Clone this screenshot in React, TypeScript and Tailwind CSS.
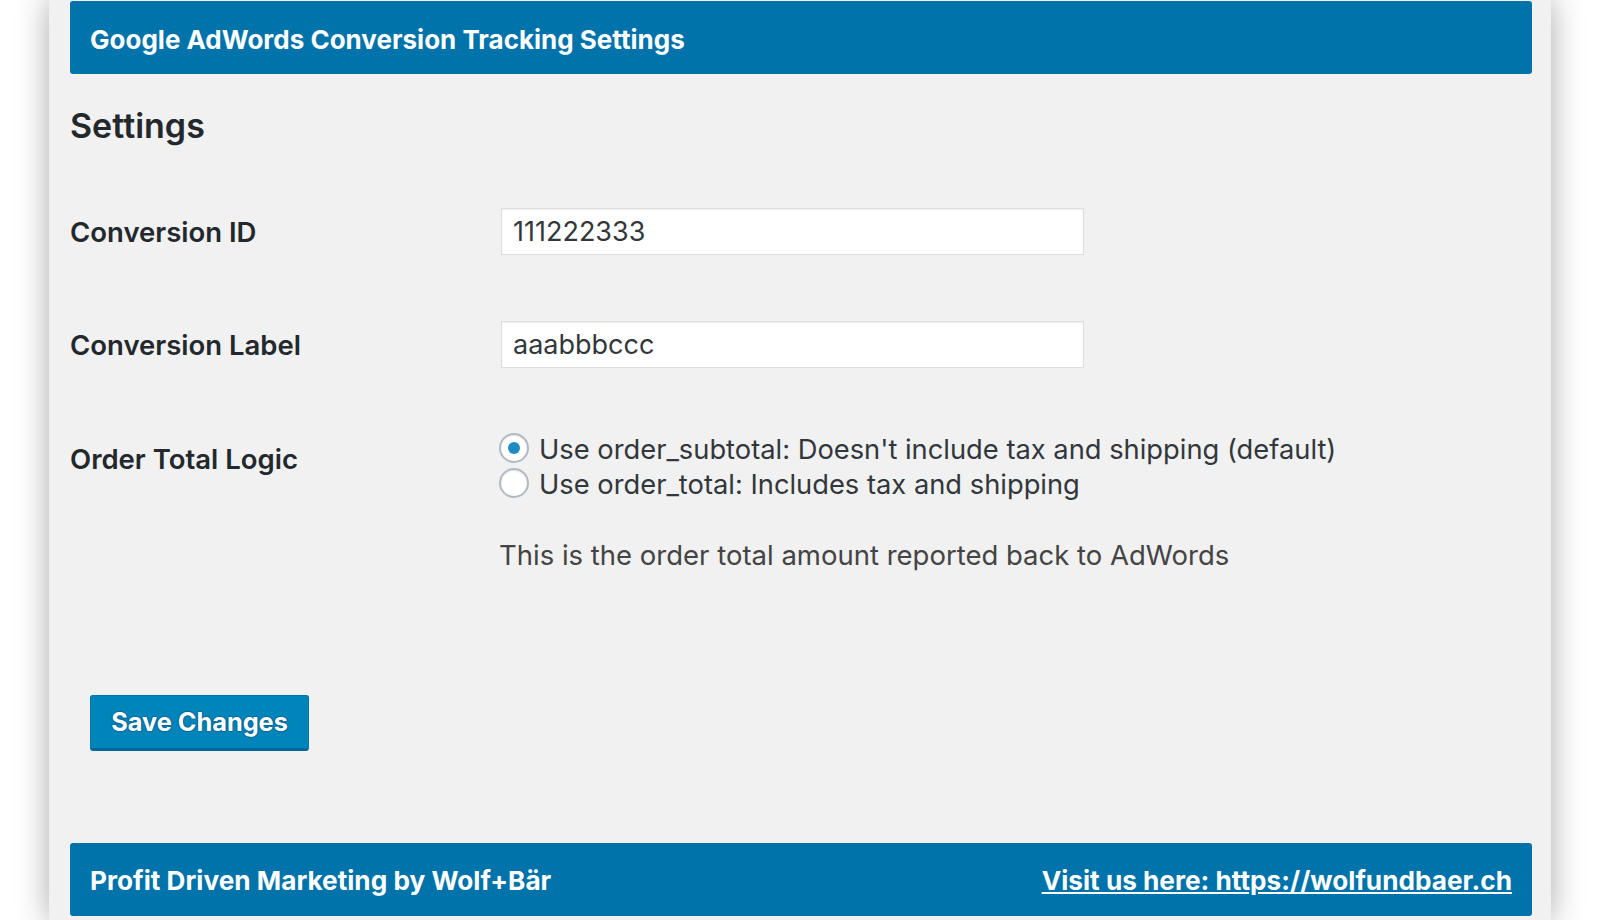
import { useState } from 'react';

const font = { fontFamily: 'Inter, "Liberation Sans", sans-serif' };

function Radio({ checked, onClick, label }: { checked: boolean; onClick: () => void; label: string }) {
  return (
    <div className="flex items-center h-[35px] cursor-pointer" onClick={onClick}>
      <span className="w-[30px] h-[30px] rounded-full border-2 border-[#b4b9be] bg-white shadow-[inset_0_1px_2px_rgba(0,0,0,0.1)] flex items-center justify-center shrink-0">
        {checked && <span className="w-[12px] h-[12px] rounded-full bg-[#1e8cbe]" />}
      </span>
      <span className="ml-[10px] pt-[3px] text-[27.3px] text-[#32373c] leading-[35px]">{label}</span>
    </div>
  );
}

export default function App() {
  const [logic, setLogic] = useState('subtotal');

  return (
    <div className="min-h-screen bg-white overflow-hidden" style={font}>
      <div className="ml-[49px] w-[1502px] h-[920px] bg-[#f1f1f1] shadow-[0_0_30px_rgba(0,0,0,0.35)] pl-[21px] pr-[19px] pt-px">
        <div className="h-[73px] rounded-[3px] bg-[#0073aa] flex items-center pl-[20px] pt-[3px]">
          <h1 className="text-white font-bold text-[26px]">Google AdWords Conversion Tracking Settings</h1>
        </div>

        <h2 className="mt-[32px] h-[40px] leading-[40px] text-[34px] font-semibold text-[#23282d]">Settings</h2>

        <div className="mt-[62px] flex items-center">
          <div className="w-[431px] text-[27.5px] font-semibold text-[#23282d] pt-[2px]">Conversion ID</div>
          <input
            defaultValue="111222333"
            className="w-[583px] h-[47px] bg-white border border-[#dddddd] shadow-[inset_0_1px_2px_rgba(0,0,0,0.07)] pl-[11px] text-[27px] text-[#32373c] outline-none"
          />
        </div>

        <div className="mt-[66px] flex items-center">
          <div className="w-[431px] text-[27.5px] font-semibold text-[#23282d] pt-[2px]">Conversion Label</div>
          <input
            defaultValue="aaabbbccc"
            className="w-[583px] h-[47px] bg-white border border-[#dddddd] shadow-[inset_0_1px_2px_rgba(0,0,0,0.07)] pl-[11px] text-[27px] text-[#32373c] outline-none"
          />
        </div>

        <div className="mt-[62px] flex items-start">
          <div className="w-[429px] mt-[12px] h-[35px] leading-[35px] text-[27.5px] font-semibold text-[#23282d]">Order Total Logic</div>
          <div>
            <Radio
              checked={logic === 'subtotal'}
              onClick={() => setLogic('subtotal')}
              label="Use order_subtotal: Doesn't include tax and shipping (default)"
            />
            <Radio
              checked={logic === 'total'}
              onClick={() => setLogic('total')}
              label="Use order_total: Includes tax and shipping"
            />
            <p className="mt-[38px] h-[35px] leading-[35px] text-[27.5px] text-[#444444]">
              This is the order total amount reported back to AdWords
            </p>
          </div>
        </div>

        <button className="mt-[122px] ml-[20px] w-[219px] h-[56px] rounded-[3px] bg-[#0085ba] border border-[#0073aa] border-b-[3px] border-b-[#006799] text-white font-bold text-[25.3px] [text-shadow:0_-1px_1px_#006799,1px_0_1px_#006799,0_1px_1px_#006799,-1px_0_1px_#006799]">
          Save Changes
        </button>

        <div className="mt-[92px] h-[73px] rounded-[3px] bg-[#0073aa] flex items-center justify-between pl-[20px] pr-[20px] pt-[2px]">
          <span className="text-white font-bold text-[26.2px]">Profit Driven Marketing by Wolf+Bär</span>
          <a href="#" className="text-white font-bold text-[26.2px] underline">
            Visit us here: https://wolfundbaer.ch
          </a>
        </div>
      </div>
    </div>
  );
}
